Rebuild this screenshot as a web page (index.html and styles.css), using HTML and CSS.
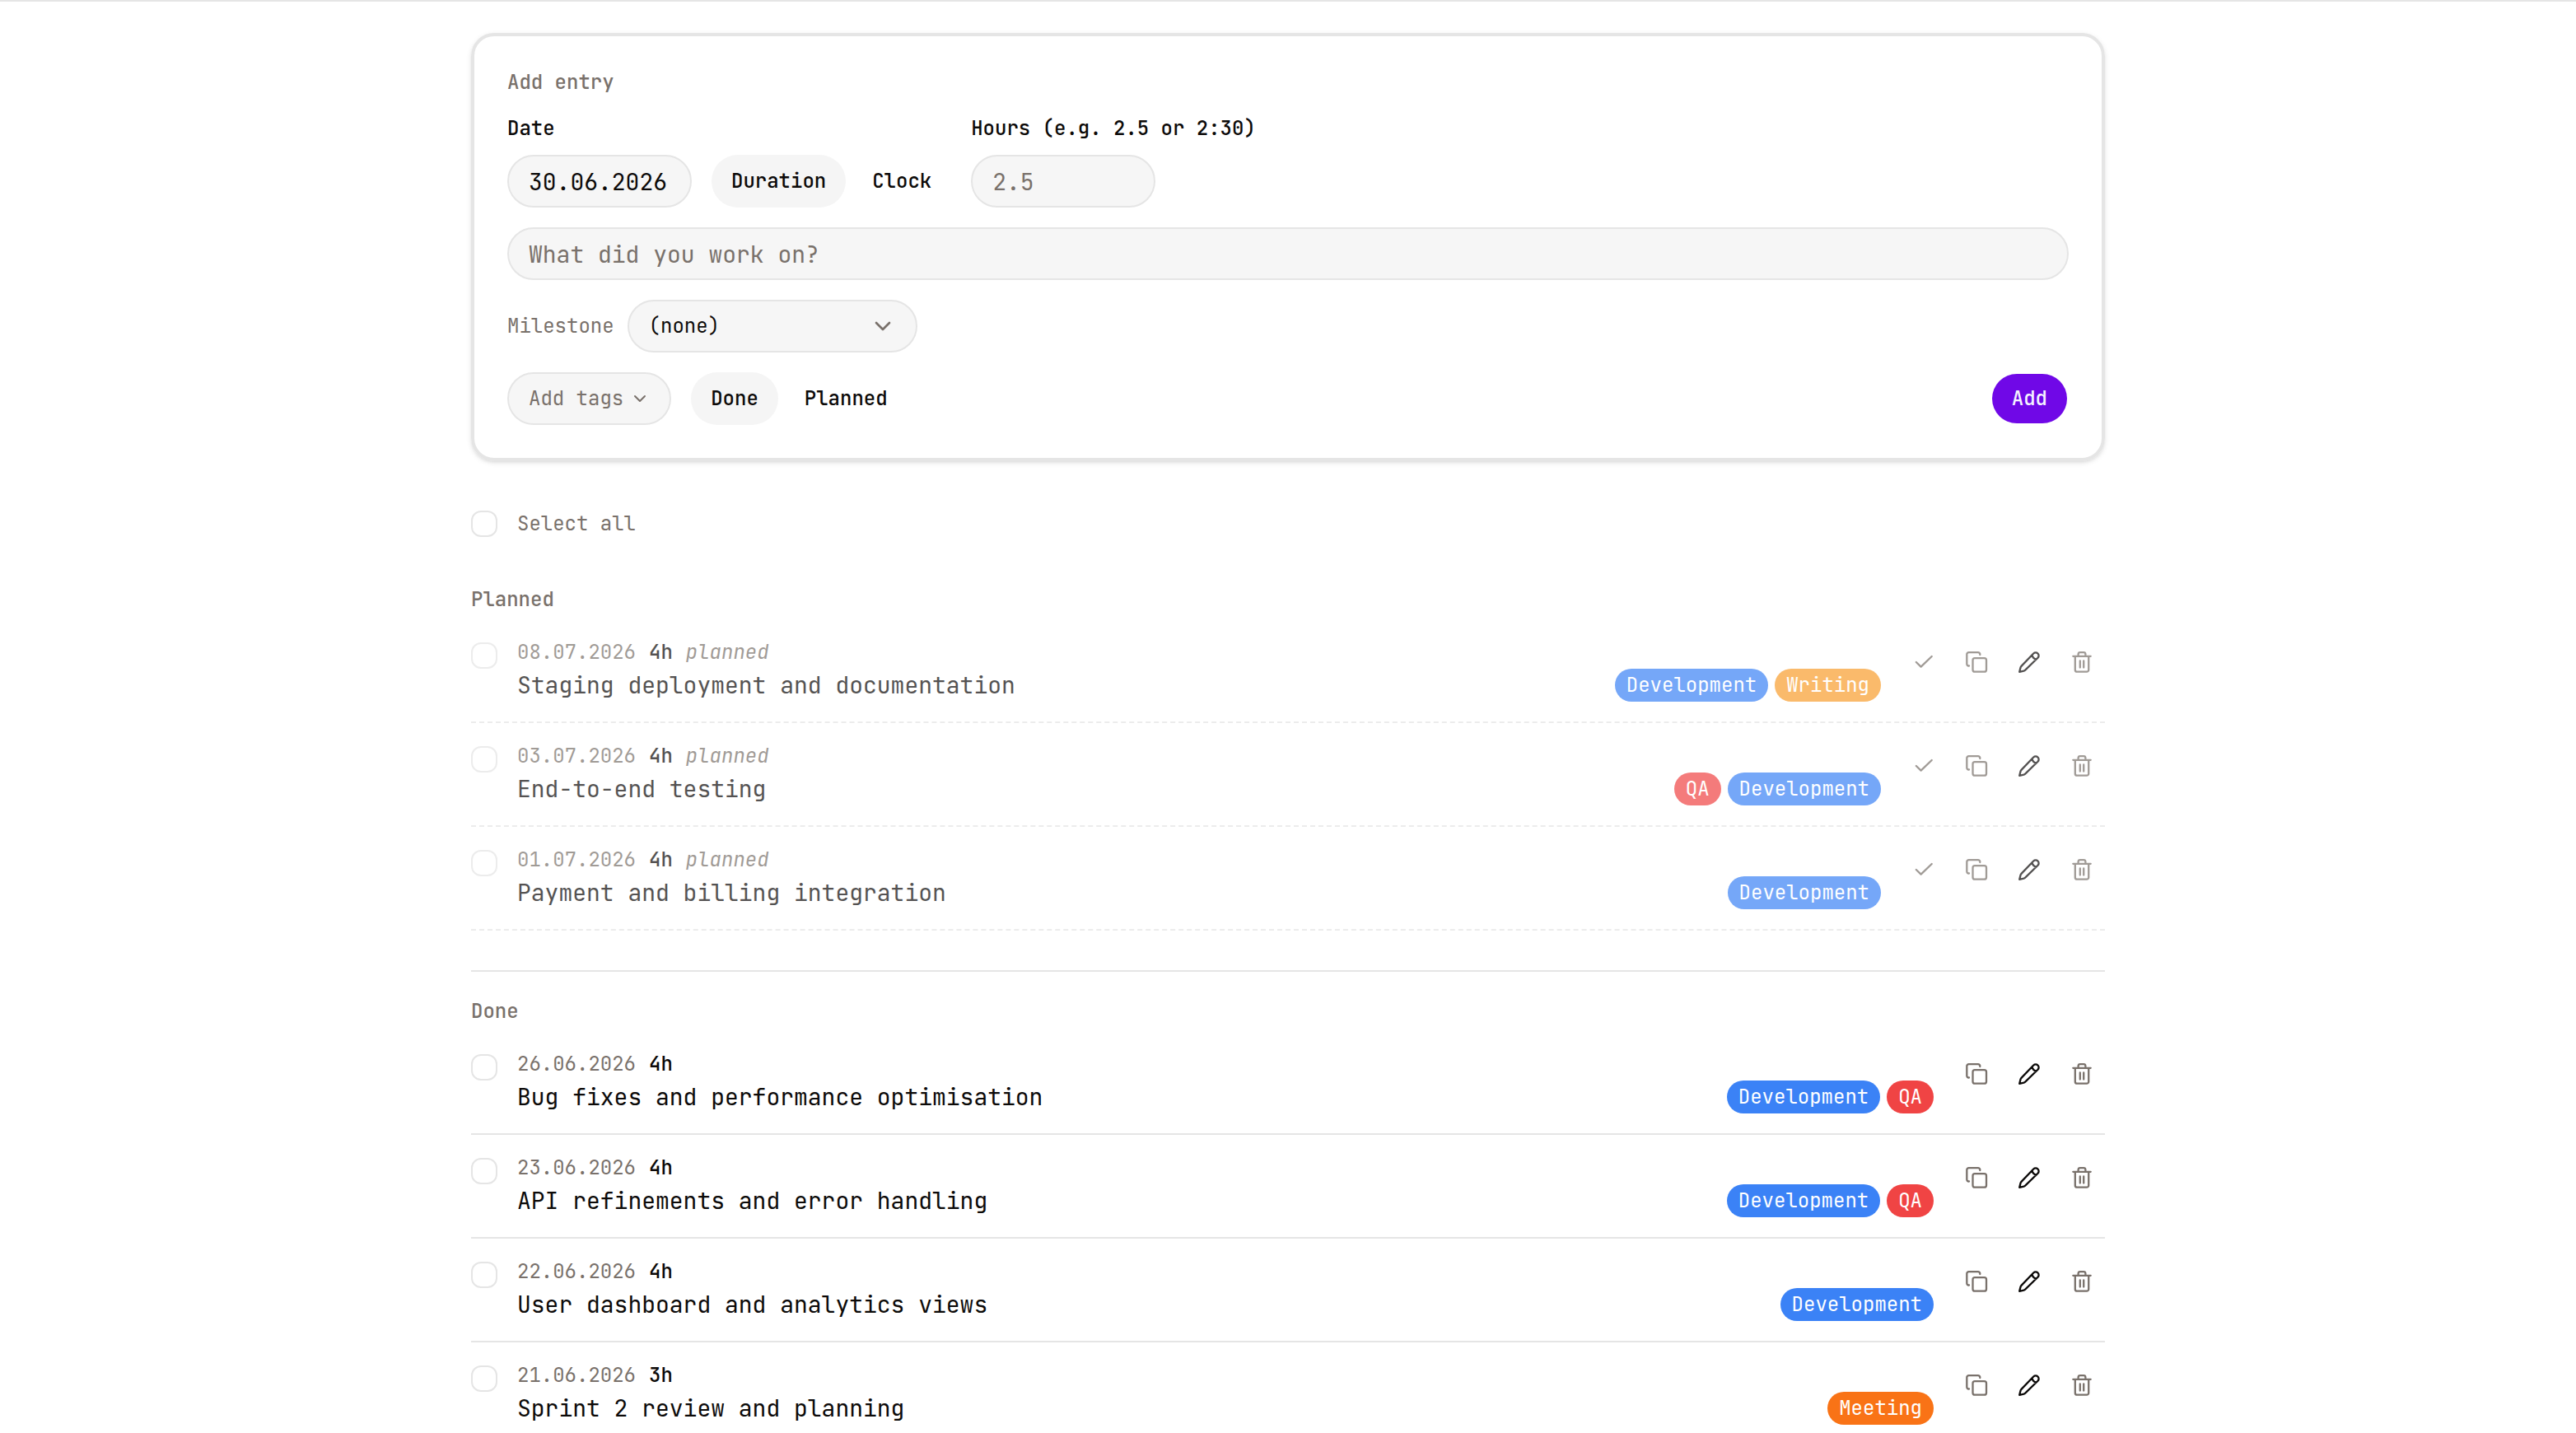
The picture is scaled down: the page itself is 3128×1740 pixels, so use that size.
FILE: index.html
```html
<!DOCTYPE html>
<html lang="en">
<head>
<meta charset="utf-8">
<meta name="viewport" content="width=device-width, initial-scale=1">
<title>Time entries</title>
<link rel="stylesheet" href="styles.css">
</head>
<body>
<svg width="0" height="0" class="sprite" aria-hidden="true">
  <symbol id="check" viewBox="0 0 28 28"><path d="M4.800 14l5.800 5.600L23.700 7"/></symbol>
  <symbol id="copy" viewBox="0 0 28 28"><rect x="9.500" y="9.200" width="16.500" height="16.500" rx="2.500"/><path d="M5 18.500H4.500A2.200 2.200 0 0 1 2.300 16.300V4.500A2.300 2.300 0 0 1 4.600 2.200H16A2.300 2.300 0 0 1 18.300 4.500V5"/></symbol>
  <symbol id="pencil" viewBox="0 0 28 28"><path d="M2.200 25.800L3.500 20.600q.3-1 1-1.700L19.200 3.500a3.700 3.700 0 0 1 5.300 5.300L9.200 23.600q-.8.700-1.800 1zM17.500 5.400c.6 2.600 2.600 4.500 5.200 5.100"/></symbol>
  <symbol id="trash" viewBox="0 0 28 28"><path d="M3.300 6.800h21.400M5.800 7v16.400a2.300 2.300 0 0 0 2.300 2.300h11.800a2.300 2.300 0 0 0 2.300-2.300V7M9.600 6.500V4.500a2.300 2.300 0 0 1 2.300-2.300h4.200a2.300 2.300 0 0 1 2.300 2.300v2M11.800 12.500v8M16.200 12.500v8"/></symbol>
  <symbol id="chevron" viewBox="0 0 24 24"><path d="M6 9l6 6 6-6"/></symbol>
</svg>
<main class="page">
  <form class="card">
    <h2 class="label muted">Add entry</h2>
    <div class="row">
      <div class="field">
        <label class="label" for="date">Date</label>
        <input class="control" id="date" type="text" value="30.06.2026">
      </div>
      <div class="toggle">
        <button class="option on" type="button">Duration</button>
        <button class="option" type="button">Clock</button>
      </div>
      <div class="field">
        <label class="label" for="hours">Hours (e.g. 2.5 or 2:30)</label>
        <input class="control" id="hours" type="text" placeholder="2.5">
      </div>
    </div>
    <input class="control wide" type="text" placeholder="What did you work on?" aria-label="Description">
    <div class="milestone">
      <label class="label muted" for="milestone">Milestone</label>
      <div class="select">
        <select class="control" id="milestone"><option>(none)</option></select>
        <svg class="icon chevron"><use href="#chevron"/></svg>
      </div>
    </div>
    <div class="row">
      <button class="control tags-button" type="button">Add tags <svg class="icon small"><use href="#chevron"/></svg></button>
      <div class="toggle">
        <button class="option on" type="button">Done</button>
        <button class="option" type="button">Planned</button>
      </div>
      <button class="submit" type="submit">Add</button>
    </div>
  </form>

  <label class="select-all muted"><input class="box" type="checkbox">Select all</label>

  <section class="group planned">
    <h2 class="label muted">Planned</h2>
    <ul class="entries">
      <li class="entry">
        <input class="box" type="checkbox" aria-label="Select entry">
        <div class="body"><p class="meta"><time>08.07.2026</time><b>4h</b><i>planned</i></p><div class="line"><p class="title">Staging deployment and documentation</p><span class="tag blue">Development</span><span class="tag amber">Writing</span></div></div>
        <div class="actions"><button aria-label="Mark done"><svg class="icon"><use href="#check"/></svg></button><button aria-label="Copy"><svg class="icon"><use href="#copy"/></svg></button><button class="edit" aria-label="Edit"><svg class="icon"><use href="#pencil"/></svg></button><button aria-label="Delete"><svg class="icon"><use href="#trash"/></svg></button></div>
      </li>
      <li class="entry">
        <input class="box" type="checkbox" aria-label="Select entry">
        <div class="body"><p class="meta"><time>03.07.2026</time><b>4h</b><i>planned</i></p><div class="line"><p class="title">End-to-end testing</p><span class="tag red">QA</span><span class="tag blue">Development</span></div></div>
        <div class="actions"><button aria-label="Mark done"><svg class="icon"><use href="#check"/></svg></button><button aria-label="Copy"><svg class="icon"><use href="#copy"/></svg></button><button class="edit" aria-label="Edit"><svg class="icon"><use href="#pencil"/></svg></button><button aria-label="Delete"><svg class="icon"><use href="#trash"/></svg></button></div>
      </li>
      <li class="entry">
        <input class="box" type="checkbox" aria-label="Select entry">
        <div class="body"><p class="meta"><time>01.07.2026</time><b>4h</b><i>planned</i></p><div class="line"><p class="title">Payment and billing integration</p><span class="tag blue">Development</span></div></div>
        <div class="actions"><button aria-label="Mark done"><svg class="icon"><use href="#check"/></svg></button><button aria-label="Copy"><svg class="icon"><use href="#copy"/></svg></button><button class="edit" aria-label="Edit"><svg class="icon"><use href="#pencil"/></svg></button><button aria-label="Delete"><svg class="icon"><use href="#trash"/></svg></button></div>
      </li>
    </ul>
  </section>

  <section class="group done">
    <h2 class="label muted">Done</h2>
    <ul class="entries">
      <li class="entry">
        <input class="box" type="checkbox" aria-label="Select entry">
        <div class="body"><p class="meta"><time>26.06.2026</time><b>4h</b></p><div class="line"><p class="title">Bug fixes and performance optimisation</p><span class="tag blue">Development</span><span class="tag red">QA</span></div></div>
        <div class="actions"><button aria-label="Copy"><svg class="icon"><use href="#copy"/></svg></button><button class="edit" aria-label="Edit"><svg class="icon"><use href="#pencil"/></svg></button><button aria-label="Delete"><svg class="icon"><use href="#trash"/></svg></button></div>
      </li>
      <li class="entry">
        <input class="box" type="checkbox" aria-label="Select entry">
        <div class="body"><p class="meta"><time>23.06.2026</time><b>4h</b></p><div class="line"><p class="title">API refinements and error handling</p><span class="tag blue">Development</span><span class="tag red">QA</span></div></div>
        <div class="actions"><button aria-label="Copy"><svg class="icon"><use href="#copy"/></svg></button><button class="edit" aria-label="Edit"><svg class="icon"><use href="#pencil"/></svg></button><button aria-label="Delete"><svg class="icon"><use href="#trash"/></svg></button></div>
      </li>
      <li class="entry">
        <input class="box" type="checkbox" aria-label="Select entry">
        <div class="body"><p class="meta"><time>22.06.2026</time><b>4h</b></p><div class="line"><p class="title">User dashboard and analytics views</p><span class="tag blue">Development</span></div></div>
        <div class="actions"><button aria-label="Copy"><svg class="icon"><use href="#copy"/></svg></button><button class="edit" aria-label="Edit"><svg class="icon"><use href="#pencil"/></svg></button><button aria-label="Delete"><svg class="icon"><use href="#trash"/></svg></button></div>
      </li>
      <li class="entry">
        <input class="box" type="checkbox" aria-label="Select entry">
        <div class="body"><p class="meta"><time>21.06.2026</time><b>3h</b></p><div class="line"><p class="title">Sprint 2 review and planning</p><span class="tag orange">Meeting</span></div></div>
        <div class="actions"><button aria-label="Copy"><svg class="icon"><use href="#copy"/></svg></button><button class="edit" aria-label="Edit"><svg class="icon"><use href="#pencil"/></svg></button><button aria-label="Delete"><svg class="icon"><use href="#trash"/></svg></button></div>
      </li>
    </ul>
  </section>
</main>
</body>
</html>
```
FILE: styles.css
```css
:root {
  --ink: #0c0a09;
  --muted: #79716b;
  --line: #e5e5e5;
  --fill: #f6f6f6;
}

* { box-sizing: border-box; }

body {
  margin: 0;
  background: #fff;
  border-top: 2px solid var(--line);
  color: var(--ink);
  font: 24px/32px "JetBrains Mono", "DejaVu Sans Mono", monospace;
}

h2, p, ul { margin: 0; padding: 0; }
ul { list-style: none; }
button, input, select { font: inherit; color: inherit; margin: 0; }
button { border: 0; background: none; padding: 0; }

.sprite { position: absolute; }

.page {
  max-width: 2064px;
  margin: 0 auto;
  padding: 38px 40px 0;
}

.label { font-size: 24px; line-height: 32px; font-weight: 500; }
.muted { color: var(--muted); }

/* Entry form */
.card {
  display: flex;
  flex-direction: column;
  gap: 24px;
  padding: 40px;
  border: 4px solid var(--line);
  border-radius: 28px;
  box-shadow: 0 2px 6px rgba(0, 0, 0, .1), 0 2px 4px -2px rgba(0, 0, 0, .1);
}

.row { display: flex; align-items: flex-end; gap: 24px; }
.field { display: flex; flex-direction: column; gap: 16px; }
.field .control { width: 224px; }

.control {
  height: 64px;
  padding: 0 24px;
  border: 2px solid var(--line);
  border-radius: 32px;
  background: var(--fill);
  font-size: 28px;
}
.control::placeholder { color: var(--muted); opacity: 1; }
.wide { width: 100%; }

.toggle { display: flex; gap: 8px; }
.option { height: 64px; padding: 0 24px; border-radius: 32px; font-weight: 500; }
.on { background: #f5f5f5; }

.milestone { display: flex; align-items: center; gap: 16px; }
.milestone .label { font-weight: 400; }
.select { display: grid; width: 352px; align-items: center; }
.select > * { grid-area: 1 / 1; }
.select .control { width: 100%; appearance: none; font-size: 24px; }

.tags-button { display: flex; align-items: center; gap: 8px; font-size: 24px; color: var(--muted); }

.submit {
  height: 64px;
  margin-left: auto;
  padding: 0 24px;
  border: 2px solid transparent;
  border-radius: 32px;
  background: #7008e7;
  background-clip: padding-box;
  color: #f5f3ff;
  font-weight: 500;
}

/* Entry lists */
.box {
  appearance: none;
  flex: none;
  width: 32px;
  height: 32px;
  border: 2px solid var(--line);
  border-radius: 12px;
  background: #fff;
}

.select-all { display: flex; align-items: center; gap: 24px; margin: 60px 0; }
.group { display: flex; flex-direction: column; gap: 8px; }
.done { margin-top: 48px; padding-top: 32px; border-top: 2px solid var(--line); }

.entry {
  display: flex;
  align-items: flex-start;
  gap: 24px;
  padding: 24px 0;
  border-bottom: 2px solid var(--line);
}
.entry .box { margin-top: 4px; }
.planned .entry { border-bottom-style: dashed; opacity: .7; }

.body { flex: 1; display: flex; flex-direction: column; gap: 4px; }
.meta { display: flex; gap: 16px; color: var(--muted); }
.meta b { font-weight: 500; color: var(--ink); }
.line { display: flex; gap: 8px; }
.title { flex: 1; font-size: 28px; line-height: 40px; }

.tag { padding: 0 14px; border-radius: 20px; line-height: 40px; color: #fff; }
.blue { background: #3b82f6; }
.amber { background: #f89e2d; }
.red { background: #f04444; }
.orange { background: #f97316; }

.actions { display: flex; gap: 8px; color: var(--muted); }
.actions button { display: grid; place-items: center; width: 56px; height: 56px; }
.actions .edit { color: var(--ink); }

.icon {
  width: 28px;
  height: 28px;
  fill: none;
  stroke: currentColor;
  stroke-width: 2.3;
  stroke-linecap: round;
  stroke-linejoin: round;
}
.chevron {
  width: 32px;
  height: 32px;
  justify-self: end;
  margin-right: 26px;
  pointer-events: none;
  color: var(--muted);
  stroke-width: 2;
}
.small { width: 24px; height: 24px; stroke-width: 2; }
```
